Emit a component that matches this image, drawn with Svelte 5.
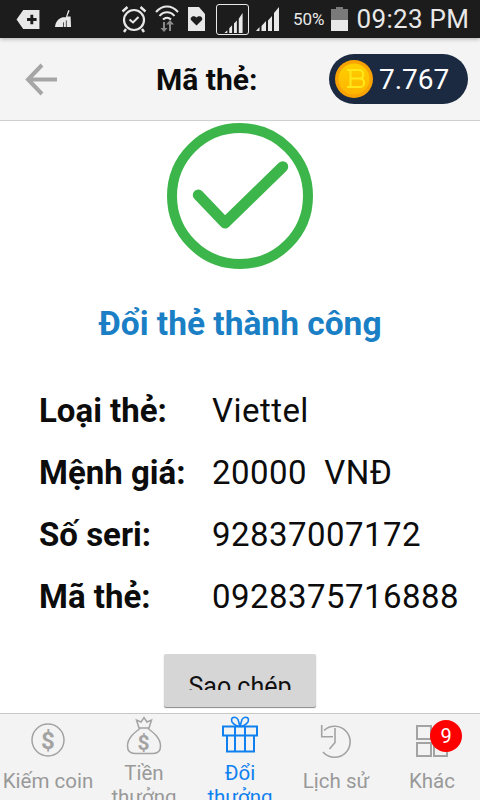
<script lang="ts">
  const details = [
    { key: 'Loại thẻ:', val: 'Viettel' },
    { key: 'Mệnh giá:', val: '20000  VNĐ' },
    { key: 'Số seri:', val: '92837007172' },
    { key: 'Mã thẻ:', val: '0928375716888' },
  ];
</script>

<div class="phone">
  <div class="status">
    <svg class="s-tag" viewBox="0 0 26 22"><path d="M8 1h17v20H8L1 11z" fill="#e8e8e8"/><path d="M15.500 6h3v3.500H22v3h-3.500V16h-3v-3.500H12v-3h3.500z" fill="#1c1c1c"/></svg>
    <svg class="s-broom" viewBox="0 0 18 20"><path d="M14 0l1.500.8-2.500 6h3.500L17 18H0C.5 13 3 9 8 7.500h3.500z" fill="#e8e8e8"/><path d="M12 11v7M9 13v5" stroke="#1c1c1c" stroke-width=".8"/></svg>
    <svg class="s-alarm" viewBox="0 0 26 28" fill="none" stroke="#e8e8e8"><circle cx="13" cy="15" r="10" stroke-width="2.200"/><path d="M8.500 14.500l3.500 3 5.500-5.500" stroke-width="2"/><path d="M1.500 6.500l5-4.500M24.500 6.500l-5-4.500M5 24l-2 3M21 24l2 3" stroke-width="2.400"/></svg>
    <svg class="s-wifi" viewBox="0 0 24 30" fill="none" stroke="#e8e8e8" stroke-width="2"><path d="M1 9c6.500-7.500 15.500-7.500 22 0M4.500 13c4-5 11-5 15 0M8 16.500c2.500-2.500 5.500-2.500 8 0"/><path d="M9 19v8M15 28v-8" stroke="#8a8a8a"/><path d="M5.500 25l3.500 4 3.500-4z" fill="#8a8a8a" stroke="none"/><path d="M15 17l4 4.500h-8z" fill="#8a8a8a" stroke="none"/></svg>
    <svg class="s-sim" viewBox="0 0 19 24"><path d="M1 0h11l6 7v17H1z" fill="#e8e8e8"/><path d="M9.500 18.500L4 13c-1.500-3 2.800-5.500 5.500-2.500C12.200 7.500 16.500 10 15 13z" fill="#1c1c1c"/></svg>
    <div class="s-sig1">
      <svg viewBox="0 0 22 22"><path d="M1 22h3v-3l-3 3zM6 22h3v-8l-3 3zM11 22h3V9l-3 3zM16 22h4V1l-4 6z" fill="#e8e8e8"/></svg>
    </div>
    <svg class="s-sig2" viewBox="0 0 24 24"><path d="M0 24h3.500v-4zM5.500 24H10v-10l-4.500 5zM12 24h4V9l-4 4.500zM18 24h5V0l-5 6z" fill="#e8e8e8"/></svg>
    <span class="s-pct">50%</span>
    <svg class="s-batt" viewBox="0 0 17 24"><path d="M5 0h7v2h5v11H0V2h5z" fill="#7a7a7a"/><rect y="13" width="17" height="11" fill="#e8e8e8"/></svg>
    <span class="s-time">09:23 PM</span>
  </div>

  <header class="head">
    <svg class="back" viewBox="0 0 33 33" fill="none" stroke="#a6a6a6" stroke-width="4"><path d="M32 16.500H4M17 2L3 16.500 17 31"/></svg>
    <h1>Mã thẻ:</h1>
    <div class="coins">
      <svg class="coin" viewBox="0 0 38 38">
        <defs>
          <linearGradient id="coin-face" x1="0" y1="0" x2="0" y2="1">
            <stop offset="0" stop-color="#ffd000"/>
            <stop offset="1" stop-color="#ffb400"/>
          </linearGradient>
        </defs>
        <circle cx="19" cy="19" r="19" fill="#f8a204"/>
        <circle cx="19" cy="19" r="15.500" fill="url(#coin-face)"/>
        <path d="M12 10h12c5 0 5.500 7.500 1.500 8.500 5 1.200 5 8.500-1 8.500H12M15.500 10v17M15.500 18.500h10" fill="none" stroke="#ffe81a" stroke-width="2"/>
      </svg>
      <span>7.767</span>
    </div>
  </header>

  <main class="content">
    <svg class="ok" viewBox="0 0 146 146" fill="none" stroke="#3cb54a">
      <circle cx="73" cy="73" r="68" stroke-width="10"/>
      <path d="M31.300 72L58 100l57.700-56.300" stroke-width="11" stroke-linecap="round" stroke-linejoin="round"/>
    </svg>
    <h2>Đổi thẻ thành công</h2>
    <div class="details">
      {#each details as row}
        <div class="row">
          <span class="key">{row.key}</span>
          <span class="val">{row.val}</span>
        </div>
      {/each}
    </div>
    <button class="copy"><span>Sao chép</span></button>
  </main>

  <nav class="tabs">
    <div class="tab t-coin">
      <svg viewBox="0 0 34 34" fill="none" stroke="#a3a3a3"><circle cx="17" cy="17" r="16" stroke-width="1.500"/><text x="17" y="25.500" text-anchor="middle" class="glyph">$</text></svg>
      <span>Kiếm coin</span>
    </div>
    <div class="tab t-bag">
      <svg viewBox="0 0 36 39" fill="none" stroke="#a3a3a3" stroke-width="1.500"><path d="M13 12L10.500 4 15 6l3-4.500L21 6l4.500-2L23 12z"/><path d="M14 12.500C8 17 1.500 22 1.500 30c0 5 3 7.500 7.500 7.500h18c4.500 0 7.500-2.500 7.500-7.500 0-8-6.500-13-12.500-17.500"/><text x="17.500" y="34" text-anchor="middle" class="glyph small">$</text></svg>
      <span>Tiền thưởng</span>
    </div>
    <div class="tab t-gift on">
      <svg viewBox="0 0 36 37" fill="none" stroke="#1080f0" stroke-width="2"><path d="M1 10.500h34v9H1zM5 19.500V35.500h27V19.500M13 10.500v25M23 10.500v25"/><path d="M18 10.500C13 10.500 9 6 9.500 3.500c.5-3 5-3 6.500 0zM18 10.500c5 0 9-4.500 8.500-7-.5-3-5-3-6.500 0z" stroke-width="1.600"/></svg>
      <span>Đổi thưởng</span>
    </div>
    <div class="tab t-hist">
      <svg viewBox="0 0 32 36" fill="none" stroke="#a3a3a3" stroke-width="1.600"><path d="M1.700 3v11.700H13M4 8.500A15.500 15.500 0 1 1 3 30"/><path d="M15 6v14.500L9.500 27"/></svg>
      <span>Lịch sử</span>
    </div>
    <div class="tab t-more">
      <svg viewBox="0 0 32 32" fill="none" stroke="#a3a3a3" stroke-width="2"><rect x="1" y="1" width="14" height="13"/><rect x="1" y="18" width="14" height="13"/><rect x="18" y="18" width="13" height="13"/></svg>
      <span>Khác</span>
      <b class="badge">9</b>
    </div>
  </nav>
</div>

<style>
  :global(body) { margin: 0; background: #fff; }
  .phone {
    width: 480px; height: 800px; overflow: hidden;
    display: flex; flex-direction: column;
    font-family: Roboto, "Noto Sans", sans-serif;
    background: #fff;
  }

  .status {
    height: 38px; flex-shrink: 0; background: #1c1c1c; color: #e8e8e8;
    display: flex; align-items: center; padding-left: 15px; box-sizing: border-box;
    position: relative; box-shadow: 0 1px 4px rgba(0,0,0,.3);
  }
  .status svg { display: block; flex-shrink: 0; }
  .s-tag { width: 26px; height: 21px; }
  .s-broom { width: 17px; height: 19px; margin-left: 14px; }
  .s-alarm { width: 26px; height: 28px; margin-left: 49px; }
  .s-wifi { width: 24px; height: 30px; margin-left: 8px; margin-top: -2px; }
  .s-sim { width: 19px; height: 24px; margin-left: 8px; }
  .s-sig1 {
    width: 33px; height: 31px; margin-left: 10px; box-sizing: border-box;
    border: 1.500px solid #e8e8e8; border-radius: 3px; padding: 7px 3px 1px 5px;
  }
  .s-sig1 svg { width: 24px; height: 21px; }
  .s-sig2 { width: 24px; height: 24px; margin-left: 7px; }
  .s-pct { font-size: 17px; margin-left: 13px; }
  .s-batt { width: 17px; height: 24px; margin-left: 6px; }
  .s-time { font-size: 26px; margin-left: 9px; white-space: nowrap; letter-spacing: .3px; }

  .head {
    height: 83px; flex-shrink: 0; box-sizing: border-box;
    background: #f4f4f4; border-bottom: 1px solid #cfcfcf;
    display: flex; align-items: center; padding: 0 12px 0 25px;
  }
  .back { width: 33px; height: 33px; }
  .head h1 {
    margin: 0 0 0 98px; font-size: 30px; font-weight: 700; color: #0c0c0c; white-space: nowrap;
  }
  .coins {
    margin-left: auto; width: 139px; height: 50px; box-sizing: border-box;
    border-radius: 25px; background: #1b2a40; color: #fff;
    display: flex; align-items: center; padding-left: 6px; gap: 6px;
    font-size: 28px;
  }
  .coin { width: 38px; height: 38px; flex-shrink: 0; }

  .content { flex: 1; min-height: 0; overflow: hidden; display: flex; flex-direction: column; align-items: center; }
  .ok { width: 146px; height: 146px; margin-top: 2px; flex-shrink: 0; }
  .content h2 {
    margin: 35px 0 0; font-size: 33.500px; line-height: 40px; font-weight: 700; color: #1a7fc4;
  }
  .details { align-self: stretch; margin-top: 44px; padding-left: 39px; display: flex; flex-direction: column; gap: 16px; }
  .row { display: flex; align-items: baseline; height: 46px; line-height: 46px; color: #0c0c0c; white-space: pre; }
  .key { width: 173px; font-size: 33px; font-weight: 700; flex-shrink: 0; }
  .val { font-size: 33px; letter-spacing: .45px; }
  .copy {
    margin-top: 34px; flex-shrink: 0; width: 152px; height: 53px; border: none; border-radius: 2px;
    background: #d6d6d6; box-shadow: 0 1px 1px #888; color: #111;
    font: 25px Roboto, sans-serif; padding: 0;
    display: flex; align-items: flex-start; justify-content: center;
  }
  .copy span { display: block; height: 36px; line-height: 66px; overflow: hidden; }

  .tabs {
    height: 87px; flex-shrink: 0; box-sizing: border-box; overflow: hidden;
    background: #f3f3f3; border-top: 1px solid #c8c8c8;
    display: grid; grid-template-columns: repeat(5, 96px);
  }
  .tab {
    position: relative; display: flex; flex-direction: column; align-items: center;
    color: #999; font-size: 20.500px; line-height: 24px; text-align: center;
  }
  .tab svg { display: block; flex-shrink: 0; }
  .tab span { display: block; }
  .t-coin svg { width: 34px; height: 34px; margin-top: 9px; }
  .t-coin span { margin-top: 12px; }
  .t-bag svg { width: 36px; height: 39px; margin-top: 2px; }
  .t-bag span { margin-top: 6px; padding: 0 8px; }
  .t-gift svg { width: 36px; height: 37px; margin-top: 2px; }
  .t-gift span { margin-top: 8px; padding: 0 8px; }
  .t-hist svg { width: 32px; height: 36px; margin-top: 8px; }
  .t-hist span { margin-top: 11px; }
  .t-more svg { width: 32px; height: 32px; margin-top: 11px; }
  .t-more span { margin-top: 12px; }
  .tab.on { color: #1080f0; }
  .glyph { font: 700 24px Roboto, sans-serif; fill: #a3a3a3; stroke: none; }
  .glyph.small { font-size: 21px; }
  .badge {
    position: absolute; left: 46px; top: 6px; width: 32px; height: 32px; border-radius: 50%;
    background: #f00; color: #fff; font-size: 20px; font-weight: 400; line-height: 32px; text-align: center;
  }
</style>
